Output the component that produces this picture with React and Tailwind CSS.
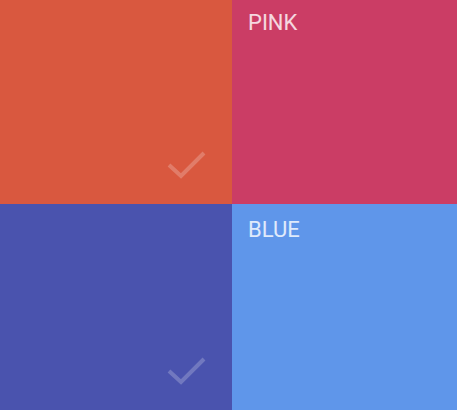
import React from "react";

const TILES = [
  { name: "Orange", bg: "bg-[#d9583f]", pad: "pt-[9px]", label: null, checked: true },
  { name: "Pink", bg: "bg-[#cb3d65]", pad: "pt-[9px]", label: "PINK", checked: false },
  { name: "Indigo", bg: "bg-[#4a53ae]", pad: "pt-[12px]", label: null, checked: true },
  { name: "Blue", bg: "bg-[#5f96ea]", pad: "pt-[12px]", label: "BLUE", checked: false },
];

function Check() {
  return (
    <svg
      width="40"
      height="32"
      viewBox="0 0 40 32"
      className="absolute right-[26px] bottom-[24px]"
      fill="none"
    >
      <polyline
        points="3,17 15,28 38,5"
        stroke="white"
        strokeOpacity="0.22"
        strokeWidth="4"
      />
    </svg>
  );
}

export default function App() {
  return (
    <div
      className="grid h-screen w-full grid-cols-[232px_1fr] grid-rows-[204px_1fr]"
      style={{ fontFamily: "Roboto, 'Noto Sans', sans-serif" }}
    >
      {TILES.map((t) => (
        <div key={t.name} className={`relative ${t.bg} ${t.pad} px-4`}>
          {t.label && (
            <span className="text-[22px] leading-7 text-white/80">{t.label}</span>
          )}
          {t.checked && <Check />}
        </div>
      ))}
    </div>
  );
}
